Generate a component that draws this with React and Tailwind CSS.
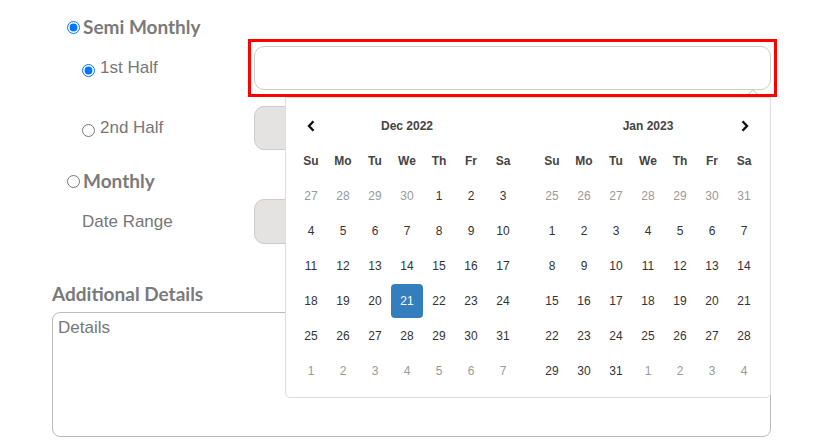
const DAYS = ["Su", "Mo", "Tu", "We", "Th", "Fr", "Sa"];

const dec = [
  [27, 28, 29, 30, 1, 2, 3],
  [4, 5, 6, 7, 8, 9, 10],
  [11, 12, 13, 14, 15, 16, 17],
  [18, 19, 20, 21, 22, 23, 24],
  [25, 26, 27, 28, 29, 30, 31],
  [1, 2, 3, 4, 5, 6, 7],
];

const jan = [
  [25, 26, 27, 28, 29, 30, 31],
  [1, 2, 3, 4, 5, 6, 7],
  [8, 9, 10, 11, 12, 13, 14],
  [15, 16, 17, 18, 19, 20, 21],
  [22, 23, 24, 25, 26, 27, 28],
  [29, 30, 31, 1, 2, 3, 4],
];

function Chevron({ dir }) {
  return (
    <svg width="9" height="12" viewBox="0 0 9 12">
      <path
        d={dir === "left" ? "M6.5 1.2 L2 6 L6.5 10.8" : "M2.5 1.2 L7 6 L2.5 10.8"}
        fill="none"
        stroke="#111"
        strokeWidth="2.4"
      />
    </svg>
  );
}

function Month({ title, weeks, left }) {
  return (
    <div className="w-[224px]">
      <div className="grid grid-cols-7 h-[34px] items-center">
        <div className="flex justify-center">{left && <Chevron dir="left" />}</div>
        <div className="col-span-5 text-center text-[12px] font-bold text-[#444]">{title}</div>
        <div className="flex justify-center">{!left && <Chevron dir="right" />}</div>
      </div>
      <div className="grid grid-cols-7">
        {DAYS.map((d) => (
          <div key={d} className="h-[35px] flex items-center justify-center text-[12px] font-bold text-[#444]">
            {d}
          </div>
        ))}
      </div>
      {weeks.map((w, i) => (
        <div key={i} className="grid grid-cols-7">
          {w.map((n, j) => {
            const off = (i === 0 && n > 20) || (i >= 4 && n < 15);
            const sel = left && i === 3 && n === 21;
            return (
              <div key={j} className="h-[35px] flex items-center justify-center">
                <div
                  className={
                    sel
                      ? "w-[32px] h-[34px] rounded-[4px] bg-[#357ebd] text-white flex items-center justify-center text-[12px]"
                      : off
                      ? "text-[12px] text-[#999]"
                      : "text-[12px] text-[#333]"
                  }
                >
                  {n}
                </div>
              </div>
            );
          })}
        </div>
      ))}
    </div>
  );
}

function App() {
  return (
    <div className="relative w-[820px] h-[448px] overflow-hidden bg-white pl-[52px] font-['Liberation_Sans',Arial,sans-serif] text-[#777]">
      <div className="pt-[16px] pl-[15px] flex items-center gap-[3px] h-[38px] box-border">
        <input type="radio" defaultChecked className="w-[13px] h-[13px] m-0" />
        <span className="font-['Lato',sans-serif] font-bold text-[19px] leading-[22px] text-[#7a7a7a]">Semi Monthly</span>
      </div>

      <div className="mt-[1px] flex items-center">
        <div className="w-[196px] pl-[30px] flex items-center gap-[5px]">
          <input type="radio" defaultChecked className="w-[13px] h-[13px] m-0 mt-[5px]" />
          <span className="text-[17px]">1st Half</span>
        </div>
        <div className="relative z-10 border-[3px] border-[#f00] px-[3px] pt-[4px] pb-[4px]">
          <div className="w-[517px] h-[44px] rounded-[10px] border border-[#ccc] bg-white"></div>
        </div>
      </div>

      <div className="mt-[9px] flex items-center">
        <div className="w-[202px] pl-[30px] flex items-center gap-[5px]">
          <input type="radio" className="w-[13px] h-[13px] m-0 mt-[5px]" />
          <span className="text-[17px]">2nd Half</span>
        </div>
        <div className="w-[517px] h-[44px] rounded-[10px] border border-[#ccc] bg-[#e5e2e2]"></div>
      </div>

      <div className="mt-[20px] pl-[15px] flex items-center gap-[3px] h-[22px]">
        <input type="radio" className="w-[13px] h-[13px] m-0" />
        <span className="font-['Lato',sans-serif] font-bold text-[19px] leading-[22px] text-[#7a7a7a]">Monthly</span>
      </div>

      <div className="mt-[7px] flex items-center">
        <div className="w-[202px] pl-[30px]">
          <span className="text-[17px]">Date Range</span>
        </div>
        <div className="w-[517px] h-[45px] rounded-[10px] border border-[#ccc] bg-[#e5e2e2]"></div>
      </div>

      <div className="mt-[39px] h-[22px] font-['Lato',sans-serif] font-bold text-[19px] leading-[22px] text-[#7a7a7a]">
        Additional Details
      </div>

      <div className="mt-[7px] w-[719px] h-[125px] rounded-[8px] border border-[#bbb] px-[5px] pt-[2px] text-[17px] text-[#777]">
        Details
      </div>

      <div className="absolute left-[748px] top-[91px] w-[10px] h-[10px] rotate-45 border-l border-t border-[#ccc] bg-white"></div>

      <div className="absolute left-[285px] top-[97px] w-[486px] h-[301px] border border-[#ddd] rounded-b-[5px] bg-white flex gap-[17px] pl-[9px] pt-[11px] font-['Liberation_Sans',Arial,sans-serif]">
        <Month title="Dec 2022" weeks={dec} left />
        <Month title="Jan 2023" weeks={jan} />
      </div>
    </div>
  );
}

export default App;
